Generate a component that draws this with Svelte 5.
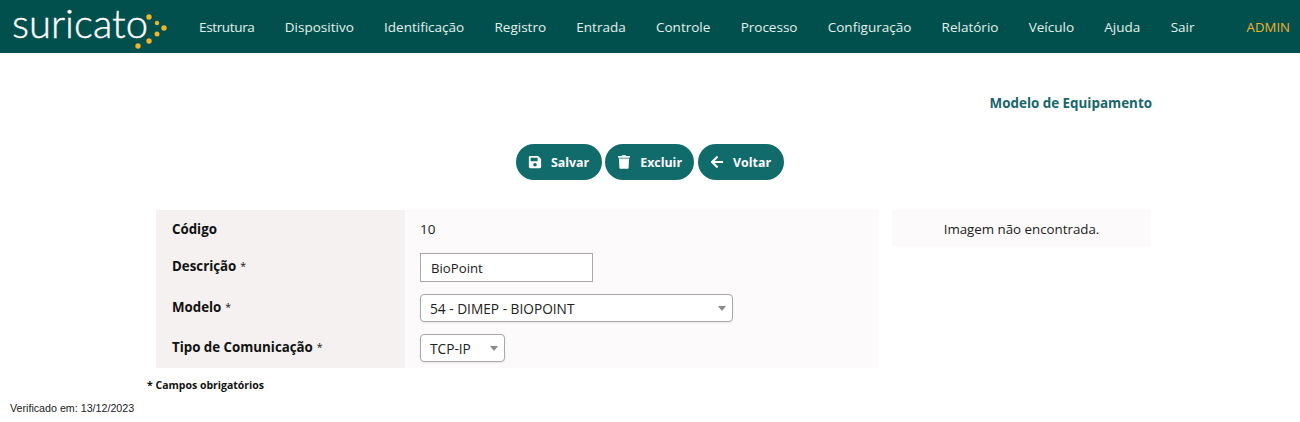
<script>
  const menu = ["Estrutura", "Dispositivo", "Identificação", "Registro", "Entrada", "Controle", "Processo", "Configuração", "Relatório", "Veículo", "Ajuda", "Sair"];
</script>

<header class="topbar">
  <a class="logo" href="#top">
    <span class="logo-text">suricato</span>
    <svg class="logo-dots" width="30" height="40" viewBox="0 0 30 40">
      <circle cx="2" cy="3" r="2.7" />
      <circle cx="10" cy="9" r="2.2" />
      <circle cx="17" cy="14" r="2.7" />
      <circle cx="10" cy="20" r="2.5" />
      <circle cx="2" cy="27" r="2.7" />
      <circle cx="-9" cy="32" r="2.7" />
    </svg>
  </a>
  <nav class="menu">
    {#each menu as item}
      <a href="#top">{item}</a>
    {/each}
  </nav>
  <span class="user">ADMIN</span>
</header>

<main class="page">
  <h1 class="title">Modelo de Equipamento</h1>

  <div class="actions">
    <button class="save">
      <svg width="14" height="14" viewBox="0 0 448 512"><path fill="currentColor" d="M433.9 129.9l-83.9-83.9A48 48 0 0 0 316.1 32H48C21.5 32 0 53.5 0 80v352c0 26.5 21.5 48 48 48h352c26.5 0 48-21.5 48-48V163.9a48 48 0 0 0-14.1-34zM224 416c-35.3 0-64-28.7-64-64s28.7-64 64-64 64 28.7 64 64-28.7 64-64 64zm96-304.5V212c0 6.6-5.4 12-12 12H76c-6.6 0-12-5.4-12-12V108c0-6.6 5.4-12 12-12h228.5c3.2 0 6.2 1.3 8.5 3.5l3.5 3.5c2.2 2.3 3.5 5.3 3.5 8.5z"/></svg>
      Salvar
    </button>
    <button class="delete">
      <svg width="12" height="14" viewBox="0 0 448 512"><path fill="currentColor" d="M432 32H312l-9.4-18.7A24 24 0 0 0 281.1 0H166.8a23.7 23.7 0 0 0-21.4 13.3L136 32H16A16 16 0 0 0 0 48v32a16 16 0 0 0 16 16h416a16 16 0 0 0 16-16V48a16 16 0 0 0-16-16zM53.2 467a48 48 0 0 0 47.9 45h245.8a48 48 0 0 0 47.9-45L416 128H32z"/></svg>
      Excluir
    </button>
    <button class="back">
      <svg width="14" height="14" viewBox="0 0 448 512"><path fill="currentColor" d="M257.5 445.1l-22.2 22.2c-9.4 9.4-24.6 9.4-33.9 0L7 273c-9.4-9.4-9.4-24.6 0-33.9L201.4 44.7c9.4-9.4 24.6-9.4 33.9 0l22.2 22.2c9.5 9.5 9.3 25-.4 34.3L136.6 216H424c13.3 0 24 10.7 24 24v32c0 13.3-10.7 24-24 24H136.6l120.5 114.8c9.8 9.3 10 24.8.4 34.3z"/></svg>
      Voltar
    </button>
  </div>

  <div class="content">
    <div class="form">
      <div class="label">Código</div>
      <div class="field"><span class="value">10</span></div>

      <div class="label row-desc">Descrição <small>*</small></div>
      <div class="field"><input class="text-input" type="text" value="BioPoint" /></div>

      <div class="label lifted">Modelo <small>*</small></div>
      <div class="field">
        <div class="select wide"><span>54 - DIMEP - BIOPOINT</span><i class="caret"></i></div>
      </div>

      <div class="label lifted">Tipo de Comunicação <small>*</small></div>
      <div class="field">
        <div class="select narrow"><span>TCP-IP</span><i class="caret"></i></div>
      </div>
    </div>

    <div class="image-box">Imagem não encontrada.</div>
  </div>

  <p class="required">* Campos obrigatórios</p>
</main>

<footer class="verified">Verificado em: 13/12/2023</footer>

<style>
  :global(body) {
    margin: 0;
    background: #fff;
    font-family: "Open Sans", "Noto Sans", sans-serif;
    font-size: 13px;
    color: #212121;
  }

  .topbar {
    display: flex;
    align-items: center;
    height: 53px;
    background: #02504e;
    padding: 0 10px 0 12px;
  }

  .logo {
    display: flex;
    align-items: center;
    position: relative;
    width: 187px;
    color: #fff;
    text-decoration: none;
  }

  .logo-text {
    font-family: "Lato", sans-serif;
    font-weight: 300;
    font-size: 40px;
    line-height: 53px;
    margin-top: -7px;
    -webkit-text-stroke: 0.4px #fff;
  }

  .logo-dots {
    position: absolute;
    left: 135px;
    top: 10px;
    overflow: visible;
    fill: #f0b429;
  }

  .menu {
    display: flex;
    gap: 30.3px;
    flex: 1;
  }

  .menu a {
    color: #e2f1ec;
    text-decoration: none;
    font-size: 13.5px;
  }

  .menu a:first-child {
    letter-spacing: -0.35px;
  }

  .user {
    color: #f0b232;
    font-size: 13.2px;
    font-weight: 500;
  }

  .page {
    width: 1005px;
    margin-left: 147px;
  }

  .title {
    margin: 41px 0 0;
    text-align: right;
    font-size: 13.4px;
    line-height: 18px;
    font-weight: 700;
    color: #17666a;
  }

  .actions {
    display: flex;
    justify-content: center;
    gap: 3px;
    margin: 32px 0 0;
    padding-left: 1px;
  }

  .actions button {
    display: flex;
    align-items: center;
    gap: 9px;
    height: 36px;
    padding: 0 13px 0 12px;
    border: none;
    border-radius: 18px;
    background: #126b6b;
    color: #fff;
    font-family: inherit;
    font-size: 12.4px;
    font-weight: 700;
  }

  .actions .delete {
    gap: 10px;
    padding: 0 12px 0 13px;
  }

  .actions .back {
    margin-left: 1px;
  }

  .content {
    display: flex;
    gap: 13px;
    margin: 30px 0 0 9px;
  }

  .form {
    display: grid;
    grid-template-columns: 249px 474px;
    grid-template-rows: 37px 41px 40px 40px;
    background: #fcfafa;
  }

  .label {
    display: flex;
    align-items: center;
    gap: 4px;
    padding-left: 16px;
    background: #f4f1f0;
    color: #111;
    font-size: 13.3px;
    font-weight: 700;
  }

  .label.row-desc {
    padding-bottom: 3px;
  }

  .label.lifted {
    padding-bottom: 2px;
  }

  .label small {
    font-size: 10.5px;
    font-weight: 400;
  }

  .field {
    display: flex;
    align-items: center;
    padding-left: 15px;
  }

  .value {
    font-size: 13.5px;
  }

  .text-input {
    box-sizing: border-box;
    width: 173px;
    height: 29px;
    padding: 0 10px;
    border: 1px solid #a9a9a9;
    background: #fff;
    color: #212121;
    font-family: inherit;
    font-size: 13.2px;
    outline: none;
  }

  .select {
    box-sizing: border-box;
    display: flex;
    align-items: center;
    justify-content: space-between;
    height: 28px;
    padding: 0 6px 0 9px;
    border: 1px solid #a9a9a9;
    border-radius: 4px;
    background: #fff;
    font-size: 13.7px;
    box-shadow: 0 1px 2px rgba(0, 0, 0, 0.08);
  }

  .select.wide {
    width: 313px;
  }

  .select.narrow {
    width: 85px;
  }

  .caret {
    width: 0;
    height: 0;
    border-left: 4px solid transparent;
    border-right: 4px solid transparent;
    border-top: 5px solid #8a8a8a;
  }

  .image-box {
    height: 36px;
    width: 259px;
    line-height: 38px;
    text-align: center;
    background: #fcfafa;
    font-size: 13.3px;
  }

  .required {
    margin: 9px 0 0;
    font-size: 10.5px;
    line-height: 16px;
    font-weight: 700;
    color: #111;
  }

  .verified {
    margin: 8px 0 0 10px;
    font-family: "Liberation Sans", Arial, sans-serif;
    font-size: 10.7px;
    line-height: 14px;
    color: #222;
  }
</style>
